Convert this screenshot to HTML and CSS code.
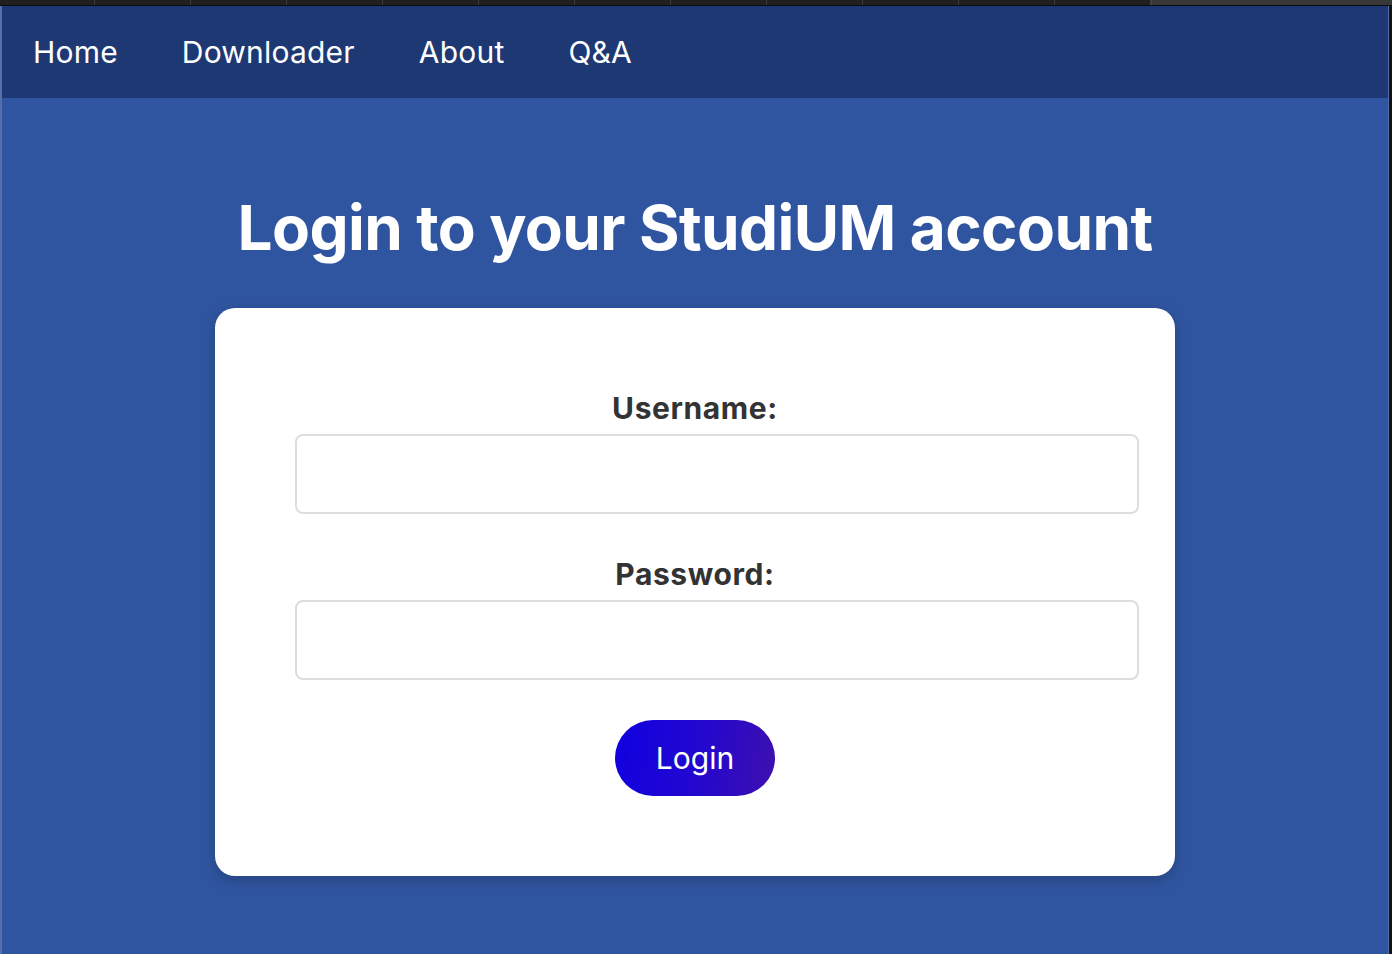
FILE: index.html
```html
<!DOCTYPE html>
<html lang="en">
<head>
<meta charset="utf-8">
<title>Login</title>
<link rel="stylesheet" href="styles.css">
</head>
<body>
<div class="chrome">
  <span class="tab"></span><span class="tab"></span><span class="tab"></span><span class="tab"></span><span class="tab"></span><span class="tab"></span><span class="tab"></span><span class="tab"></span><span class="tab"></span><span class="tab"></span><span class="tab"></span><span class="tab"></span>
  <span class="tab-rest"></span>
</div>
<div class="frame">
  <div class="page">
    <nav class="nav">
      <a class="nav-link" href="#">Home</a>
      <a class="nav-link" href="#">Downloader</a>
      <a class="nav-link" href="#">About</a>
      <a class="nav-link" href="#">Q&amp;A</a>
    </nav>
    <main class="main">
      <h1 class="title">Login to your StudiUM account</h1>
      <form class="card">
        <label class="label" for="username">Username:</label>
        <input class="input" id="username" type="text">
        <label class="label label-pw" for="password">Password:</label>
        <input class="input" id="password" type="password">
        <button class="btn" type="button">Login</button>
      </form>
    </main>
  </div>
  <div class="edge"></div>
</div>
</body>
</html>
```

FILE: styles.css
```css
* { box-sizing: content-box; }
html, body {
  margin: 0;
  padding: 0;
  height: 100%;
}
body {
  background: #1f1f1f;
  font-family: Inter, "Noto Sans", "Liberation Sans", sans-serif;
  display: flex;
  flex-direction: column;
  overflow: hidden;
}
.chrome {
  height: 6px;
  display: flex;
  background: #1f1f1f;
  border-bottom: 1px solid #0c0c0c;
  box-sizing: border-box;
  flex-shrink: 0;
}
.tab {
  width: 95px;
  border-right: 1px solid #3a3a3a;
}
.tab:first-child { width: 94px; }
.tab-rest {
  flex: 1;
  background: #383838;
  border-left: 1px solid #454545;
}
.frame {
  flex: 1;
  display: flex;
}
.page {
  flex: 1;
  display: flex;
  flex-direction: column;
  background: #3055a0;
  border-left: 2px solid #5670ad;
}
.edge {
  width: 3px;
  background: #121212;
  border-left: 1px solid #5670ad;
}
.nav {
  height: 92px;
  background: #1e3874;
  display: flex;
  align-items: center;
}
.nav-link {
  color: #ffffff;
  text-decoration: none;
  font-size: 30px;
  letter-spacing: 0.2px;
  padding: 0 32px 0 31px;
  line-height: 36px;
}
.nav-link + .nav-link { padding-left: 32px; }
.main {
  flex: 1;
  display: flex;
  flex-direction: column;
  align-items: center;
  padding-top: 93px;
}
.title {
  margin: 0 0 43px;
  color: #ffffff;
  font-size: 62px;
  font-weight: 700;
  line-height: 74px;
  letter-spacing: -0.6px;
}
.card {
  width: 800px;
  padding: 80px;
  background: #ffffff;
  border-radius: 20px;
  box-shadow: 0 4px 14px rgba(0, 0, 0, 0.22);
  display: flex;
  flex-direction: column;
  align-items: flex-start;
}
.label {
  align-self: center;
  color: #333333;
  font-size: 30px;
  font-weight: 700;
  letter-spacing: 0.6px;
  line-height: 36px;
  margin-top: 2px;
  margin-bottom: 8px;
}
.label-pw { margin-top: 42px; }
.input {
  width: 800px;
  height: 36px;
  padding: 20px;
  border: 2px solid #dddddd;
  border-radius: 8px;
  font-size: 24px;
  font-family: inherit;
  background: #ffffff;
  outline: none;
}
.btn {
  align-self: center;
  margin-top: 40px;
  box-sizing: border-box;
  width: 160px;
  height: 76px;
  border: none;
  border-radius: 38px;
  background: linear-gradient(100deg, #1000e0 0%, #2207d0 50%, #3e10ae 100%);
  color: #ffffff;
  font-family: inherit;
  font-size: 30px;
  font-weight: 400;
  padding: 0;
}
```
